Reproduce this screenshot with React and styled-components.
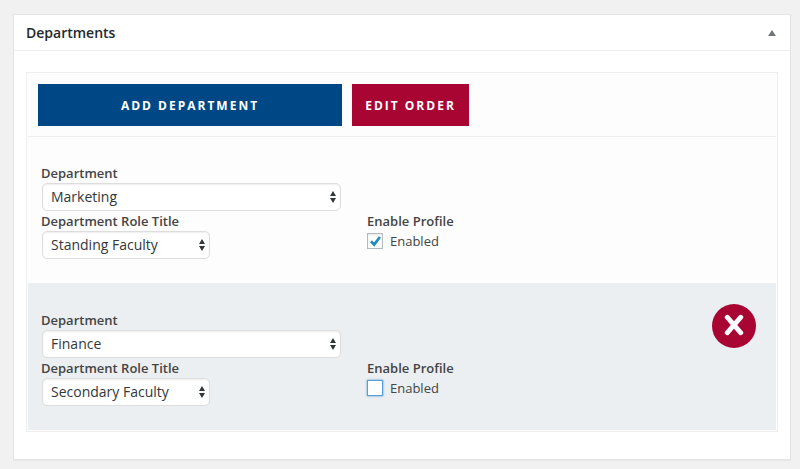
import React, { useState } from 'react';
import styled, { createGlobalStyle } from 'styled-components';

const GlobalStyle = createGlobalStyle`
  body {
    margin: 0;
    background: #f1f1f1;
    color: #444;
    font-family: 'Open Sans', sans-serif;
    font-size: 13px;
    line-height: 20px;
  }

  *, *::before, *::after {
    box-sizing: border-box;
  }

  button, select, input {
    font-family: inherit;
  }
`;

const Page = styled.main`
  padding: 14px 9px 9px 13px;
`;

const Postbox = styled.section`
  background: #fff;
  border: 1px solid #e5e5e5;
  box-shadow: 0 1px 1px rgba(0, 0, 0, 0.04);
`;

const PostboxHeader = styled.header`
  display: flex;
  align-items: center;
  justify-content: space-between;
  height: 36px;
  padding-left: 12px;
  border-bottom: 1px solid #eee;
`;

const Title = styled.h2`
  margin: 0;
  color: #23282d;
  font-size: 14px;
  font-weight: 600;
`;

const ToggleButton = styled.button`
  display: flex;
  align-items: center;
  justify-content: center;
  width: 36px;
  height: 36px;
  padding: 0;
  border: none;
  background: none;
  color: #72777c;
  cursor: pointer;
`;

const PostboxBody = styled.div`
  padding: 21px 12px 27px;
`;

const Repeater = styled.div`
  padding: 1px;
  border: 1px solid #eee;
  background: #fdfdfd;
`;

const Toolbar = styled.div`
  display: flex;
  gap: 10px;
  padding: 10px;
`;

const Button = styled.button`
  width: ${props => props.$wide ? '304px' : '117px'};
  height: 42px;
  padding: 0;
  border: none;
  background: ${props => props.$wide ? '#004785' : '#a90533'};
  color: #fff;
  font-size: 12px;
  font-weight: 700;
  letter-spacing: 2px;
  text-transform: uppercase;
  white-space: nowrap;
  cursor: pointer;
`;

const Row = styled.div`
  display: flex;
  align-items: flex-start;
  padding: 0 20px 24px 13px;
  border-top: 1px solid ${props => props.$shaded ? '#ebeff2' : '#eee'};
  background: ${props => props.$shaded ? '#ebeff2' : 'transparent'};
`;

const Fields = styled.div`
  display: grid;
  flex: 1;
  grid-template-columns: 326px 1fr;
  padding-top: 26px;
`;

const Field = styled.div`
  display: flex;
  flex-direction: column;
  align-items: flex-start;
  grid-column: ${props => props.$full ? '1 / -1' : 'auto'};
`;

const Label = styled.label`
  font-weight: 600;
`;

const SelectWrap = styled.div`
  position: relative;
  width: ${props => props.$wide ? '299px' : '168px'};
  margin-left: 1px;
`;

const Select = styled.select`
  display: block;
  appearance: none;
  width: 100%;
  height: 28px;
  padding: 0 24px 0 8px;
  border: 1px solid #ddd;
  border-radius: 5px;
  background: #fff;
  box-shadow: inset 0 1px 2px rgba(0, 0, 0, 0.07);
  color: #32373c;
  font-size: 14px;
  line-height: 20px;
`;

const SelectArrows = styled.svg`
  position: absolute;
  top: 8px;
  right: 5px;
  fill: #32373c;
  pointer-events: none;
`;

const CheckGroup = styled.fieldset`
  min-width: 0;
  margin: 0;
  padding: 0;
  border: none;
`;

const Legend = styled.legend`
  padding: 0;
  font-weight: 600;
`;

const CheckLabel = styled.label`
  display: flex;
  align-items: center;
  gap: 7px;
  width: fit-content;
`;

const CheckWrap = styled.span`
  position: relative;
  display: flex;
`;

const Checkbox = styled.input`
  appearance: none;
  width: 16px;
  height: 16px;
  margin: 0;
  border: 1px solid ${props => props.$active ? '#5b9dd9' : '#b4b9be'};
  background: #fff;
  box-shadow: ${props => props.$active
    ? '0 0 2px rgba(30, 140, 190, 0.8)'
    : 'inset 0 1px 2px rgba(0, 0, 0, 0.1)'};
  outline: none;
`;

const Tick = styled.svg`
  position: absolute;
  top: 0;
  left: 0;
  fill: none;
  stroke: #1e8cbe;
  stroke-width: 2.7;
  pointer-events: none;
`;

const RemoveButton = styled.button`
  display: flex;
  align-items: center;
  justify-content: center;
  width: 44px;
  height: 44px;
  margin-top: 20px;
  padding: 0;
  border: none;
  border-radius: 50%;
  background: #a90533;
  cursor: pointer;
`;

const departments = ['Marketing', 'Finance'];
const roles = ['Standing Faculty', 'Secondary Faculty'];

const initialRows = [
  { id: 1, department: 'Marketing', role: 'Standing Faculty', enabled: true },
  { id: 2, department: 'Finance', role: 'Secondary Faculty', enabled: false, active: true }
];

const SelectField = ({ id, label, value, options, wide, onChange }) => (
  <Field $full={wide}>
    <Label htmlFor={id}>{label}</Label>
    <SelectWrap $wide={wide}>
      <Select id={id} value={value} onChange={(e) => onChange(e.target.value)}>
        {options.map(option => (
          <option key={option} value={option}>{option}</option>
        ))}
      </Select>
      <SelectArrows width="6" height="12" viewBox="0 0 6 12" aria-hidden="true">
        <path d="M3 0L6 5H0zM0 7h6L3 12z" />
      </SelectArrows>
    </SelectWrap>
  </Field>
);

const DepartmentRow = ({ row, onChange, onRemove }) => (
  <Row $shaded={row.active}>
    <Fields>
      <SelectField
        id={`department-${row.id}`}
        label="Department"
        value={row.department}
        options={departments}
        wide
        onChange={(department) => onChange({ department })}
      />
      <SelectField
        id={`role-${row.id}`}
        label="Department Role Title"
        value={row.role}
        options={roles}
        onChange={(role) => onChange({ role })}
      />
      <CheckGroup>
        <Legend>Enable Profile</Legend>
        <CheckLabel>
          <CheckWrap>
            <Checkbox
              type="checkbox"
              $active={row.active}
              checked={row.enabled}
              onChange={(e) => onChange({ enabled: e.target.checked })}
            />
            {row.enabled && (
              <Tick width="16" height="16" viewBox="0 0 16 16" aria-hidden="true">
                <path d="M4 8.2L7.2 11.6L12.9 4" />
              </Tick>
            )}
          </CheckWrap>
          Enabled
        </CheckLabel>
      </CheckGroup>
    </Fields>
    {row.active && (
      <RemoveButton type="button" aria-label="Remove department" onClick={onRemove}>
        <svg width="20" height="24" viewBox="0 0 20 24" aria-hidden="true">
          <path d="M3.2 3.2L16.8 18.8M16.8 3.2L3.2 18.8" stroke="#fff" strokeWidth="4.8" strokeLinecap="round" />
        </svg>
      </RemoveButton>
    )}
  </Row>
);

const App = () => {
  const [rows, setRows] = useState(initialRows);
  const [isOpen, setIsOpen] = useState(true);

  const updateRow = (id, changes) => {
    setRows(prev => prev.map(row => (row.id === id ? { ...row, ...changes } : row)));
  };

  const removeRow = (id) => {
    setRows(prev => prev.filter(row => row.id !== id));
  };

  const addRow = () => {
    setRows(prev => [
      ...prev,
      { id: Date.now(), department: departments[0], role: roles[0], enabled: false }
    ]);
  };

  return (
    <Page>
      <GlobalStyle />
      <Postbox>
        <PostboxHeader>
          <Title>Departments</Title>
          <ToggleButton
            type="button"
            aria-label="Toggle panel"
            aria-expanded={isOpen}
            onClick={() => setIsOpen(!isOpen)}
          >
            <svg width="8" height="6" viewBox="0 0 8 6" fill="currentColor" aria-hidden="true">
              <path d="M4 0L8 6H0z" />
            </svg>
          </ToggleButton>
        </PostboxHeader>
        {isOpen && (
          <PostboxBody>
            <Repeater>
              <Toolbar>
                <Button type="button" $wide onClick={addRow}>Add Department</Button>
                <Button type="button">Edit Order</Button>
              </Toolbar>
              {rows.map(row => (
                <DepartmentRow
                  key={row.id}
                  row={row}
                  onChange={(changes) => updateRow(row.id, changes)}
                  onRemove={() => removeRow(row.id)}
                />
              ))}
            </Repeater>
          </PostboxBody>
        )}
      </Postbox>
    </Page>
  );
};

export default App;
